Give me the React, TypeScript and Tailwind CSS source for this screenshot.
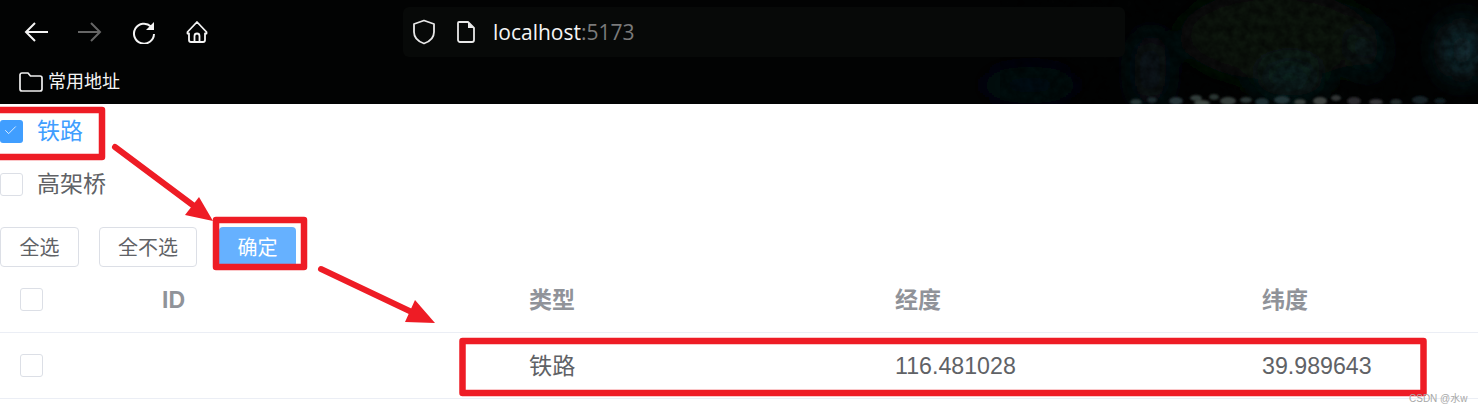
import { Check } from "lucide-react";

const cjk = "font-['Liberation_Sans','Noto_Sans_CJK_SC',sans-serif]";

// rough pebbles along the bottom of the wallpaper
const pebbles = [
  [1136, 102, 6, 3, "#263436"], [1152, 100, 5, 3, "#1e2c2e"], [1176, 101, 7, 4, "#263438"], [1196, 98, 6, 3, "#323c3a"],
  [1202, 103, 8, 3, "#3e4642"], [1214, 97, 5, 3, "#2a3432"], [1228, 101, 8, 4, "#363e3a"], [1246, 100, 6, 3, "#2a3634"],
  [1262, 102, 7, 4, "#1e2e32"], [1282, 100, 8, 4, "#243438"], [1300, 102, 6, 3, "#343e3a"], [1320, 101, 7, 4, "#3e4240"],
  [1336, 98, 5, 3, "#303636"], [1354, 101, 7, 4, "#2c2a2e"], [1376, 102, 7, 3, "#343438"], [1396, 102, 6, 3, "#22292b"],
  [1420, 100, 8, 4, "#142428"], [1440, 101, 6, 3, "#101c20"],
] as const;

function Box({ checked }: { checked?: boolean }) {
  return (
    <span
      className={
        checked
          ? "flex h-[23px] w-[23px] items-center justify-center rounded-[3px] bg-[#409eff]"
          : "block h-[23px] w-[23px] rounded-[3px] border border-[#dcdfe6] bg-white"
      }
    >
      {checked && <Check size={15} strokeWidth={1.25} className="-ml-[3px] -mt-[2px] text-white" />}
    </span>
  );
}

function NavIcons() {
  return (
    <div className="flex items-center">
      <svg width="26" height="24" viewBox="0 0 26 24" fill="none" stroke="#f4f4f4" strokeWidth="2" className="ml-[23px]">
        <path d="M25 12H3M12 3l-9 9 9 9" />
      </svg>
      <svg width="26" height="24" viewBox="0 0 26 24" fill="none" stroke="#666" strokeWidth="2" className="ml-[28px]">
        <path d="M1 12h22M14 3l9 9-9 9" />
      </svg>
      <svg width="24" height="24" viewBox="0 0 24 24" fill="none" stroke="#f4f4f4" strokeWidth="2" className="ml-[29px]">
        <path d="M19 6.500A10 10 0 1 0 22 14" />
        <path d="M22 2v8h-8z" fill="#f4f4f4" stroke="none" />
      </svg>
      <svg width="24" height="24" viewBox="0 0 24 24" fill="none" stroke="#f4f4f4" strokeWidth="1.8" className="ml-[29px]">
        <path d="M12 2 2.500 12v1.500H4V20a2 2 0 0 0 2 2h12a2 2 0 0 0 2-2v-6.500h1.500V12z" strokeLinejoin="round" />
        <path d="M9.500 22v-6a2.500 2.500 0 0 1 5 0v6" />
      </svg>
    </div>
  );
}

function AddressBar() {
  return (
    <div className="ml-[194px] flex h-[50px] w-[722px] items-center rounded-md bg-[#070908] pl-[9px]">
      <svg width="24" height="26" viewBox="0 0 24 26" fill="none" stroke="#e8e8e8" strokeWidth="1.8">
        <path d="M12 1.500 2 5v8c0 5.500 4 9.500 10 11.500 6-2 10-6 10-11.500V5z" strokeLinejoin="round" />
      </svg>
      <svg width="20" height="24" viewBox="0 0 20 24" fill="none" stroke="#e8e8e8" strokeWidth="1.8" className="ml-[20px]">
        <path d="M3 2h9l6 6v12a2 2 0 0 1-2 2H4a2 2 0 0 1-2-2V3a1 1 0 0 1 1-1z" strokeLinejoin="round" />
        <path d="M12 2l6 6h-6z" fill="#e8e8e8" stroke="none" />
      </svg>
      <span className="ml-[17px] font-['Open_Sans',sans-serif] text-[21px] leading-none text-[#f5f5f5]">
        localhost<span className="text-[#7a7a7a]">:5173</span>
      </span>
    </div>
  );
}

function Rocks() {
  return (
    <svg width="1478" height="104" viewBox="0 0 1478 104" className="absolute inset-0">
      <defs>
        <filter id="soft" x="-40%" y="-40%" width="180%" height="180%">
          <feGaussianBlur stdDeviation="14" />
        </filter>
        <filter id="tiny">
          <feGaussianBlur stdDeviation="1" />
        </filter>
        <filter id="grain" x="0" y="0" width="100%" height="100%">
          <feTurbulence type="fractalNoise" baseFrequency="0.12" numOctaves="3" seed="7" />
          <feColorMatrix values="0 0 0 0 0 0 0 0 0 0 0 0 0 0 0 1.600 0 0 0 -0.400" />
        </filter>
      </defs>
      <rect width="1478" height="104" fill="#020303" />
      <g filter="url(#soft)">
        <ellipse cx="1275" cy="35" rx="95" ry="45" fill="#07160f" />
        <ellipse cx="1150" cy="70" rx="16" ry="40" fill="#0c1e22" />
        <ellipse cx="1290" cy="80" rx="32" ry="16" fill="#0e2a2c" />
        <ellipse cx="1368" cy="50" rx="10" ry="26" fill="#0e282a" />
        <ellipse cx="1462" cy="50" rx="20" ry="28" fill="#18383f" />
        <ellipse cx="1030" cy="85" rx="50" ry="18" fill="#061014" />
      </g>
      <rect x="1000" width="478" height="104" filter="url(#grain)" opacity="0.6" />
      <g filter="url(#tiny)">
        {pebbles.map(([cx, cy, rx, ry, fill]) => (
          <ellipse key={`${cx}-${cy}`} cx={cx} cy={cy} rx={rx} ry={ry} fill={fill} />
        ))}
      </g>
    </svg>
  );
}

function Annotations() {
  return (
    <svg width="1478" height="414" viewBox="0 0 1478 414" fill="none" className="pointer-events-none absolute inset-0">
      <g stroke="#ee1c25" strokeWidth="6.500" strokeLinejoin="round">
        <rect x="-4" y="110" width="106" height="47" />
        <rect x="216" y="220" width="88" height="47" />
        <rect x="462.500" y="341" width="961" height="52" />
      </g>
      <g stroke="#ee1c25" strokeWidth="6" strokeLinecap="round">
        <path d="M115 147 198 209" />
        <path d="M321 269 418 315" />
      </g>
      <g fill="#ee1c25">
        <path d="M213 221 185 215 199 197z" />
        <path d="M435 323 405 322 415 300z" />
      </g>
    </svg>
  );
}

export default function App() {
  return (
    <div className={`relative h-[414px] w-[1478px] overflow-hidden bg-white ${cjk}`}>
      <header className="relative h-[104px] bg-[#020303]">
        <Rocks />
        <div className="relative flex h-[63px] items-center pt-[1px]">
          <NavIcons />
          <AddressBar />
        </div>
        <div className="relative flex items-center pl-[19px] pt-[9px]">
          <svg width="24" height="20" viewBox="0 0 24 20" fill="none" stroke="#f0f0f0" strokeWidth="1.700">
            <path d="M1 3a2 2 0 0 1 2-2h6l2.500 3H21a2 2 0 0 1 2 2v11a2 2 0 0 1-2 2H3a2 2 0 0 1-2-2z" strokeLinejoin="round" />
          </svg>
          <span className="ml-[5px] text-[18px] leading-none text-[#f5f5f5]">常用地址</span>
        </div>
      </header>

      <div className="flex h-[54px] items-center pt-[1px] text-[23px] text-[#409eff]">
        <Box checked />
        <span className="ml-[14px]">铁路</span>
      </div>
      <div className="flex h-[53px] items-center text-[23px] text-[#606266]">
        <Box />
        <span className="ml-[14px]">高架桥</span>
      </div>

      <div className="mt-[16px] flex text-[20px] leading-none">
        <button className="h-[40px] w-[79px] rounded-[4px] border border-[#dcdfe6] bg-white pt-[1px] text-[#606266]">全选</button>
        <button className="ml-[20px] h-[40px] w-[98px] rounded-[4px] border border-[#dcdfe6] bg-white pt-[1px] text-[#606266]">全不选</button>
        <button className="ml-[22px] h-[40px] w-[77px] rounded-[4px] bg-[#66b1ff] pt-[1px] text-white">确定</button>
      </div>

      <div className="grid h-[66px] grid-cols-[162px_367px_366px_367px_1fr] items-center border-b border-[#ebeef5] text-[23px] font-bold text-[#909399]">
        <div className="pl-5"><Box /></div>
        <div className="pt-[2px]">ID</div>
        <div className="pt-[2px]">类型</div>
        <div className="pt-[2px]">经度</div>
        <div className="pt-[2px]">纬度</div>
      </div>
      <div className="grid h-[66px] grid-cols-[162px_367px_366px_367px_1fr] items-center border-b border-[#ebeef5] text-[23.200px] text-[#606266]">
        <div className="pl-5"><Box /></div>
        <div></div>
        <div className="pt-[2px]">铁路</div>
        <div className="pt-[2px]">116.481028</div>
        <div className="pt-[2px]">39.989643</div>
      </div>

      <Annotations />
      <span className="absolute left-[1409px] top-[393px] text-[10px] leading-[12px] text-[#a8a8a8]">CSDN @水w</span>
    </div>
  );
}
